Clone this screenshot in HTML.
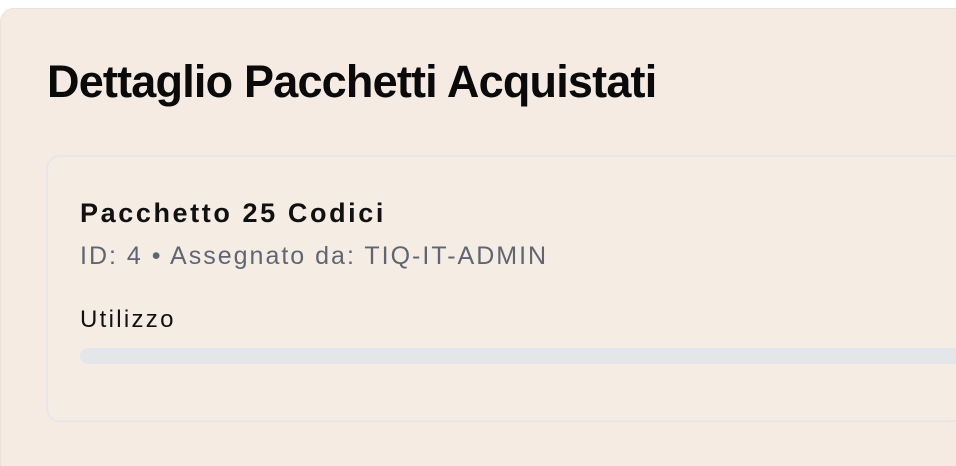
<!DOCTYPE html>
<html><head><meta charset="utf-8"><style>
html,body{margin:0;padding:0;width:956px;height:466px;overflow:hidden;background:#fff;font-family:"Liberation Sans",sans-serif;position:relative;}
.outer{position:absolute;left:0;top:8px;width:956px;height:458px;background:#f5ebe3;border-top:1px solid #ece2da;border-left:1px solid #ece2da;border-radius:14px 0 0 0;box-sizing:border-box;}
h1{position:absolute;left:47px;top:55px;margin:0;font-size:45px;font-weight:700;color:#0a0a0a;letter-spacing:-0.8px;line-height:54px;white-space:nowrap;}
.card{position:absolute;left:46px;top:155px;width:910px;height:267px;border:2px solid #e8e6e6;border-right:none;border-radius:14px 0 0 14px;box-sizing:border-box;background:#f5ece4;}
.t{position:absolute;left:80px;top:196px;font-size:27px;font-weight:700;color:#111;line-height:34px;white-space:nowrap;letter-spacing:2.6px;}
.s{position:absolute;left:80px;top:240px;font-size:25px;color:#5f6673;line-height:32px;white-space:nowrap;letter-spacing:2.0px;}
.u{position:absolute;left:80px;top:304px;font-size:24px;color:#111;line-height:32px;letter-spacing:2.3px;}
.bar{position:absolute;left:80px;top:348px;width:876px;height:16px;background:#e5e6e9;border-radius:8px 0 0 8px;}
</style></head><body>
<div class="outer"></div>
<h1>Dettaglio Pacchetti Acquistati</h1>
<div class="card"></div>
<div class="t">Pacchetto 25 Codici</div>
<div class="s">ID: 4 • Assegnato da: TIQ-IT-ADMIN</div>
<div class="u">Utilizzo</div>
<div class="bar"></div>
</body></html>
